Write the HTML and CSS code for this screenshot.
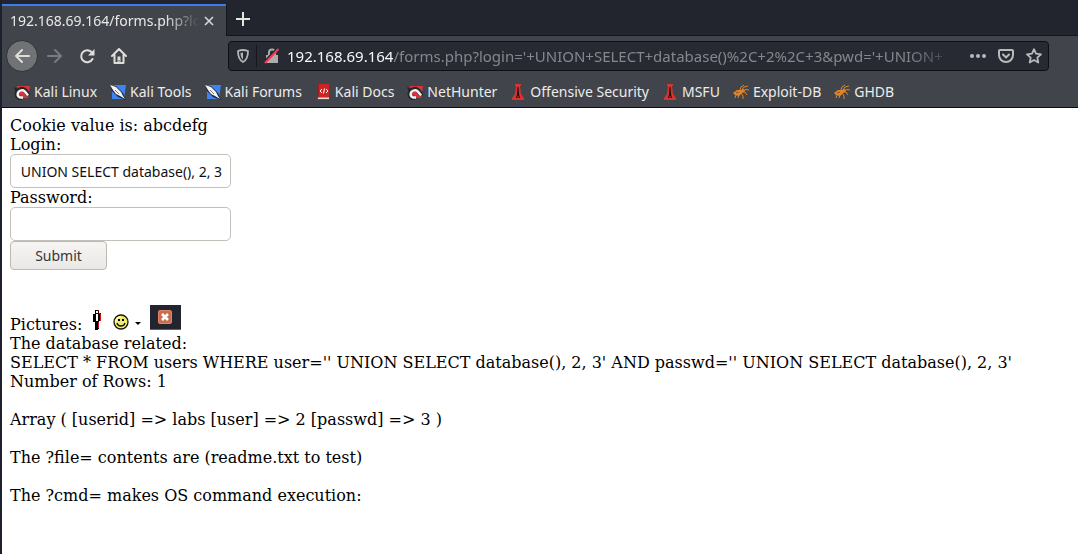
FILE: index.html
```html
<!DOCTYPE html>
<html lang="en">
<head>
<meta charset="utf-8">
<title>192.168.69.164/forms.php</title>
<link rel="stylesheet" href="styles.css">
</head>
<body>
<svg class="defs" aria-hidden="true">
  <defs>
    <g id="hunter">
      <path d="M3 2h13l-2 12H6z" fill="#d9343a"/>
      <path d="M0 3l4 2-2 4z" fill="#24262c"/>
      <path d="M8 14H5.500C1.500 12 2 7 6 5.500c4-1.500 6 1.500 8.500 6" fill="none" stroke="#24262c" stroke-width="4.500"/>
      <path d="M9 13.500H6C2.500 12 3 8 6.500 6.500c3.500-1.300 5 1.500 7.500 5" fill="none" stroke="#f4f2f2" stroke-width="2.400"/>
    </g>
    <g id="tools">
      <path d="M2 1h14l-2 14H2z" fill="#3f83f2"/>
      <path d="M0 1l6 1 7 7 3 7-8-3-6-6z" fill="#22262e"/>
      <path d="M0 1l6 2 5 5 2 4 2 3-5-3-4-2-3-4z" fill="#f4f4f4"/>
      <path d="M5 6l4 4" stroke="#777" stroke-width="1"/>
    </g>
    <g id="tower">
      <path d="M5 0h6v2h-1l1 8 3 4v2H2v-2l3-4 1-8H5z" fill="#d8342f"/>
      <path d="M7.500 3h1l.5 7 1 4H8.500v-2h-1v2H6l1-4z" fill="#250b0d"/>
    </g>
    <g id="bug" fill="none" stroke="#df8428" stroke-width="1">
      <path d="M0 9l4-3 4 0 3-1 1 2-3 2-3 3-4-1z" fill="#df8428" stroke="none"/>
      <path d="M7 6l1-3 3-2M9 6l2-3 4-1M10 7l3-1.500 3 .5M9 8l3 0 2 3M8 9l2 3v3M3 11l-1 3M6 11l-1 3"/>
      <path d="M3 9l3-1" stroke="#8a5220"/>
    </g>
  </defs>
</svg>
<header class="browser">
  <div class="tabs">
    <div class="tab">
      <span class="tab-title">192.168.69.164/forms.php?lo</span>
      <button class="tab-close" aria-label="Close tab"><svg width="10" height="10" viewBox="0 0 10 10"><path d="M1 1l8 8M9 1L1 9" stroke="#d8d8d5" stroke-width="1.600"/></svg></button>
    </div>
    <button class="new-tab" aria-label="New tab"><svg width="14" height="14" viewBox="0 0 14 14"><path d="M7 0v14M0 7h14" stroke="#e4e4e1" stroke-width="2"/></svg></button>
  </div>
  <nav class="toolbar" aria-label="Navigation">
    <button class="nav-btn back" aria-label="Back"><svg width="16" height="16" viewBox="0 0 16 16"><path d="M15 8H2M8 2L2 8l6 6" fill="none" stroke="#deded9" stroke-width="2" stroke-linecap="round" stroke-linejoin="round"/></svg></button>
    <button class="nav-btn" aria-label="Forward" disabled><svg width="16" height="16" viewBox="0 0 16 16"><path d="M1 8h13M8 2l6 6-6 6" fill="none" stroke="#797b80" stroke-width="2" stroke-linecap="round" stroke-linejoin="round"/></svg></button>
    <button class="nav-btn" aria-label="Reload"><svg width="16" height="16" viewBox="0 0 16 16"><path d="M12.500 4A6 6 0 1 0 13.500 11" fill="none" stroke="#deded9" stroke-width="2" stroke-linecap="round"/><path d="M15.500 1v6.500H9z" fill="#deded9"/></svg></button>
    <button class="nav-btn" aria-label="Home"><svg width="16" height="16" viewBox="0 0 16 16"><path d="M1 8l7-7 7 7M3.500 7v8h9V7" fill="none" stroke="#deded9" stroke-width="2" stroke-linecap="round" stroke-linejoin="round"/><path d="M6.500 8.500h3V15h-3z" fill="#deded9"/><path d="M8 12v1.500" stroke="#42444b"/></svg></button>
    <div class="urlbar">
      <button class="url-icon shield" aria-label="Tracking protection"><svg width="14" height="14" viewBox="0 0 14 14"><path d="M7 1c2 0 3.500.4 5 1 0 5-1 9-5 11C3 11 2 7 2 2c1.500-.6 3-1 5-1z" fill="none" stroke="#b3b4b6" stroke-width="1.800" stroke-linejoin="round"/><path d="M7 3.500v7C5.200 9 4.500 7 4.500 4z" fill="#b3b4b6" /></svg></button>
      <button class="url-icon lock" aria-label="Connection is not secure"><svg width="16" height="16" viewBox="0 0 16 16"><path d="M2 7h12v8H2z" fill="#aaacae"/><path d="M5 7V4.500a3 3 0 0 1 6 0V7" fill="none" stroke="#aaacae" stroke-width="2"/><path d="M0 14L13.500 0" stroke="#282a33" stroke-width="2"/><path d="M1 15L14.500 1" stroke="#ed3c57" stroke-width="2"/></svg></button>
      <a class="url" href="#"><span class="host">192.168.69.164</span>/forms.php?login='+UNION+SELECT+database()%2C+2%2C+3&amp;pwd='+UNION+</a>
      <div class="url-actions">
        <button class="url-icon" aria-label="Page actions"><svg width="16" height="16" viewBox="0 0 16 16" fill="#b9babc"><circle cx="2" cy="8" r="2"/><circle cx="8" cy="8" r="2"/><circle cx="14" cy="8" r="2"/></svg></button>
        <button class="url-icon" aria-label="Save to Pocket"><svg width="16" height="16" viewBox="0 0 16 16" fill="none" stroke="#b9babc" stroke-width="2" stroke-linecap="round" stroke-linejoin="round"><path d="M2 2h12a1 1 0 0 1 1 1v4a7 7 0 0 1-14 0V3a1 1 0 0 1 1-1zM5 6.500l3 3 3-3"/></svg></button>
        <button class="url-icon" aria-label="Bookmark this page"><svg width="16" height="16" viewBox="0 0 16 16"><path d="M8 1.200l2 4.500 5 .6-3.700 3.300 1 4.900L8 12l-4.300 2.500 1-4.900L1 6.300l5-.6z" fill="none" stroke="#b9babc" stroke-width="1.800" stroke-linejoin="round"/></svg></button>
      </div>
    </div>
  </nav>
  <nav class="bookmarks" aria-label="Bookmarks">
    <a href="#"><svg class="fav" viewBox="0 0 16 16"><use href="#hunter"/></svg>Kali Linux</a>
    <a href="#"><svg class="fav" viewBox="0 0 16 16"><use href="#tools"/></svg>Kali Tools</a>
    <a href="#"><svg class="fav" viewBox="0 0 16 16"><use href="#tools"/></svg>Kali Forums</a>
    <a href="#"><svg class="fav" viewBox="0 0 16 16"><path d="M2 0h12v16H4l-2-1z" fill="#cf2425"/><path d="M2 0h2v13l-2 1z" fill="#a11c20"/><path d="M3 13.500h11V15H3z" fill="#e9dcda"/><path d="M7 5L5 7l2 2M11 5l2 2-2 2M9.500 4.500l-1 5" fill="none" stroke="#fff"/></svg>Kali Docs</a>
    <a href="#"><svg class="fav" viewBox="0 0 16 16"><use href="#hunter"/></svg>NetHunter</a>
    <a href="#"><svg class="fav" viewBox="0 0 16 16"><use href="#tower"/></svg>Offensive Security</a>
    <a href="#"><svg class="fav" viewBox="0 0 16 16"><use href="#tower"/></svg>MSFU</a>
    <a href="#"><svg class="fav" viewBox="0 0 16 16"><use href="#bug"/></svg>Exploit-DB</a>
    <a href="#"><svg class="fav" viewBox="0 0 16 16"><use href="#bug"/></svg>GHDB</a>
  </nav>
</header>
<main class="page">
  <div>Cookie value is: abcdefg</div>
  <form class="login">
    <label for="login">Login:</label>
    <input id="login" type="text" name="login" value="' UNION SELECT database(), 2, 3">
    <label for="pwd">Password:</label>
    <input id="pwd" type="text" name="pwd">
    <button type="button">Submit</button>
  </form>
  <div class="pictures">
    <span>Pictures:</span>
    <svg class="person" width="8" height="20" viewBox="0 0 8 20" shape-rendering="crispEdges"><path d="M2 0h4v3h2v8H6v8H5v1H2v-8H0V4h2z" fill="#000"/><path d="M3 1h2v2H3zM3 4h2v7H3z" fill="#fff"/><path d="M5 0h1v1H5zM6 3h1v1H6zM7 4h1v7H7zM5 12h1v6H5z" fill="#c81712"/></svg>
    <svg class="smile" width="28" height="16" viewBox="0 0 28 16"><circle cx="8" cy="8" r="7" fill="#f0ec70" stroke="#171708" stroke-width="1.300"/><path d="M3 8c0-3 2-5 5-5" fill="none" stroke="#fffcb5" stroke-width="1.500"/><path d="M5 5h2v2H5zM9 5h2v2H9z"/><path d="M4 9c1 4 7 4 8 0" fill="none" stroke="#111" stroke-width="1.300"/><path d="M22 8h6l-3 3z"/></svg>
    <svg class="closer" width="31" height="25" viewBox="0 0 31 25"><path d="M0 0h31v25H0z" fill="#22252f"/><path d="M0 24h31v1H0z" fill="#3265d7"/><rect x="8.500" y="5.500" width="13" height="13" rx="1.500" fill="#c96e50" stroke="#e58464"/><path d="M12 9l6 6M18 9l-6 6" stroke="#fff" stroke-width="2.500"/></svg>
  </div>
  <div>The database related:</div>
  <div>SELECT * FROM users WHERE user='' UNION SELECT database(), 2, 3' AND passwd='' UNION SELECT database(), 2, 3'</div>
  <div>Number of Rows: 1</div>
  <p>Array ( [userid] =&gt; labs [user] =&gt; 2 [passwd] =&gt; 3 )</p>
  <p>The ?file= contents are (readme.txt to test)</p>
  <p>The ?cmd= makes OS command execution:</p>
</main>
<script src="page.js"></script>
</body>
</html>
```

FILE: page.js
```js
// Keep the end of a long login value in view.
const login = document.getElementById("login");
login.scrollLeft = login.scrollWidth;
```

FILE: styles.css
```css
* { box-sizing: border-box; }

body {
  margin: 0;
  min-height: 100vh;
  border-left: 2px solid #1d202d;
  background: #fff;
  color: #000;
  font: 16px/19px "DejaVu Serif", serif;
}

button {
  margin: 0;
  padding: 0;
  border: 0;
  background: none;
}

svg { flex: none; }
a { text-decoration: none; }

.defs {
  position: absolute;
  width: 0;
  height: 0;
}

.browser {
  border-bottom: 1px solid #0c0c0d;
  background: #42444b;
  font: 15px/20px "Noto Sans", sans-serif;
}

.tabs {
  display: flex;
  height: 36px;
  padding: 4px 0 0 2px;
  border-bottom: 1px solid #15161b;
  margin-left: -2px;
  background: #23252e;
}

.tab {
  display: flex;
  align-items: center;
  width: 224px;
  height: 32px;
  padding: 0 11px 0 8px;
  gap: 4px;
  border-top: 2px solid #3b7cf0;
  background: #42444b;
}

.tab-title {
  flex: 1;
  overflow: hidden;
  white-space: nowrap;
  color: #e9e9e7;
  font-size: 14px;
  -webkit-mask-image: linear-gradient(to left, transparent, #000 34px);
  mask-image: linear-gradient(to left, transparent, #000 34px);
}

.tab-close, .new-tab, .nav-btn, .url-icon {
  display: flex;
  align-items: center;
  justify-content: center;
}

.tab-close { width: 12px; }

.new-tab {
  width: 33px;
  height: 31px;
  padding-bottom: 2px;
  border-left: 1px solid #15161b;
}

.toolbar {
  display: flex;
  align-items: center;
  height: 40px;
  padding: 0 29px 0 4px;
}

.nav-btn {
  flex: none;
  width: 32px;
  height: 32px;
}

.nav-btn.back {
  margin-right: 1px;
  border: 1px solid #303238;
  border-radius: 16px;
  background: #707276;
}

.urlbar {
  display: flex;
  align-items: center;
  flex: 1;
  min-width: 0;
  height: 30px;
  margin-left: 93px;
  padding-right: 6px;
  border: 1px solid #0e0f13;
  border-radius: 4px;
  background: #282a33;
}

.url-icon { flex: none; height: 22px; }

.shield {
  width: 28px;
  border-right: 1px solid #17181d;
}

.lock { width: 30px; }

.url {
  flex: 1;
  min-width: 0;
  overflow: hidden;
  white-space: nowrap;
  color: #85878b;
  -webkit-mask-image: linear-gradient(to left, transparent, #000 56px);
  mask-image: linear-gradient(to left, transparent, #000 56px);
}

.host { color: #f8f8f8; }

.url-actions {
  display: flex;
  gap: 12px;
  padding-left: 8px;
}

.bookmarks {
  display: flex;
  align-items: center;
  height: 31px;
  padding-left: 12px;
  gap: 13px;
}

.bookmarks a {
  display: flex;
  align-items: center;
  gap: 4px;
  color: #ececea;
  font-size: 14px;
  white-space: nowrap;
}

.fav { width: 16px; height: 16px; }

.page { padding: 8px; }

.login {
  display: flex;
  flex-direction: column;
  align-items: flex-start;
}

.login input {
  width: 221px;
  height: 34px;
  padding: 0 8px;
  border: 1px solid #c3bfb9;
  border-radius: 5px;
  background: #fff;
  color: #111;
  font: 14px "Noto Sans", sans-serif;
}

.login button {
  width: 97px;
  height: 29px;
  border: 1px solid #bfb8b1;
  border-radius: 4px;
  background: linear-gradient(#f6f5f4, #eae8e6);
  color: #333638;
  font: 14px "Noto Sans", sans-serif;
}

.pictures {
  display: flex;
  align-items: flex-end;
  height: 29px;
  margin-top: 35px;
}

.person { margin: 0 12px 4px 11px; }
.smile { margin: 0 9px 4px 0; }
.closer { margin-bottom: 4px; }

.page p { margin: 19px 0; }
```
